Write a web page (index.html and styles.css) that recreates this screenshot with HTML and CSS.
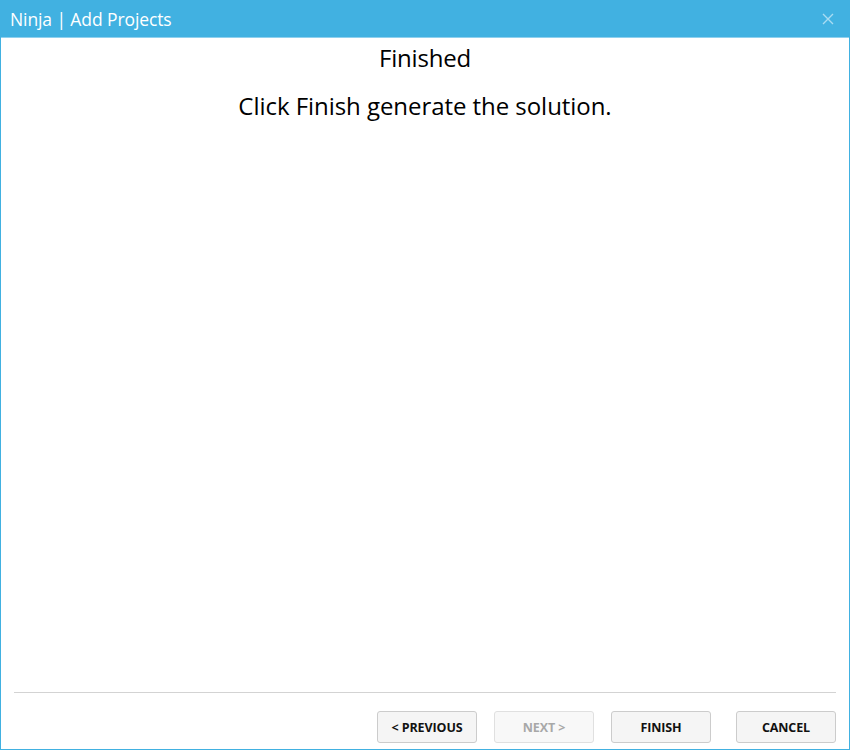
FILE: index.html
```html
<!DOCTYPE html>
<html>
<head>
<meta charset="utf-8">
<link rel="stylesheet" href="styles.css">
</head>
<body>
<div class="window">
  <div class="titlebar">
    <span class="title">Ninja | Add Projects</span>
    <span class="close">
      <svg width="12" height="12" viewBox="0 0 12 12"><path d="M1 1 L11 11 M11 1 L1 11" stroke="#a9dcf2" stroke-width="1.4" fill="none"/></svg>
    </span>
  </div>
  <div class="content">
    <div class="heading">Finished</div>
    <div class="message">Click Finish generate the solution.</div>
  </div>
  <div class="footer">
    <div class="separator"></div>
    <div class="buttons">
      <button class="btn">&lt; PREVIOUS</button>
      <button class="btn disabled">NEXT &gt;</button>
      <button class="btn">FINISH</button>
      <button class="btn cancel">CANCEL</button>
    </div>
  </div>
</div>
</body>
</html>
```
FILE: styles.css
```css
html, body {
  margin: 0;
  padding: 0;
  background: #ffffff;
}
.window {
  width: 850px;
  height: 750px;
  box-sizing: border-box;
  border: 1px solid #41b1e1;
  display: flex;
  flex-direction: column;
  font-family: "Open Sans", "Noto Sans", sans-serif;
  background: #ffffff;
}
.titlebar {
  height: 36px;
  background: #41b1e1;
  border-bottom: 1px solid #8fd0ee;
  display: flex;
  align-items: center;
  justify-content: space-between;
  padding: 0 15px 0 9px;
  flex-shrink: 0;
}
.title {
  color: #ffffff;
  font-size: 17.5px;
  letter-spacing: -0.1px;
  margin-top: -1px;
}
.close {
  display: flex;
  align-items: center;
}
.content {
  flex: 1;
  display: flex;
  flex-direction: column;
  align-items: center;
  color: #000000;
}
.heading {
  font-size: 24px;
  margin-top: 4px;
  line-height: 32px;
  letter-spacing: -0.2px;
}
.message {
  font-size: 24px;
  margin-top: 16px;
  line-height: 32px;
  letter-spacing: -0.05px;
}
.footer {
  padding: 0 13px 6px 13px;
}
.separator {
  height: 1px;
  background: #d3d3d3;
  margin-bottom: 18px;
}
.buttons {
  display: flex;
  justify-content: flex-end;
  gap: 17px;
}
.btn {
  width: 100px;
  height: 32px;
  box-sizing: border-box;
  border: 1px solid #cccccc;
  border-radius: 3px;
  background: #f5f5f5;
  font-family: "Open Sans", "Noto Sans", sans-serif;
  font-weight: 700;
  font-size: 12.5px;
  color: #111111;
  padding: 0;
  letter-spacing: -0.1px;
}
.btn.disabled {
  color: #a8a8a8;
  border-color: #e0e0e0;
  background: #f8f8f8;
}
.btn.cancel {
  margin-left: 8px;
}
```
